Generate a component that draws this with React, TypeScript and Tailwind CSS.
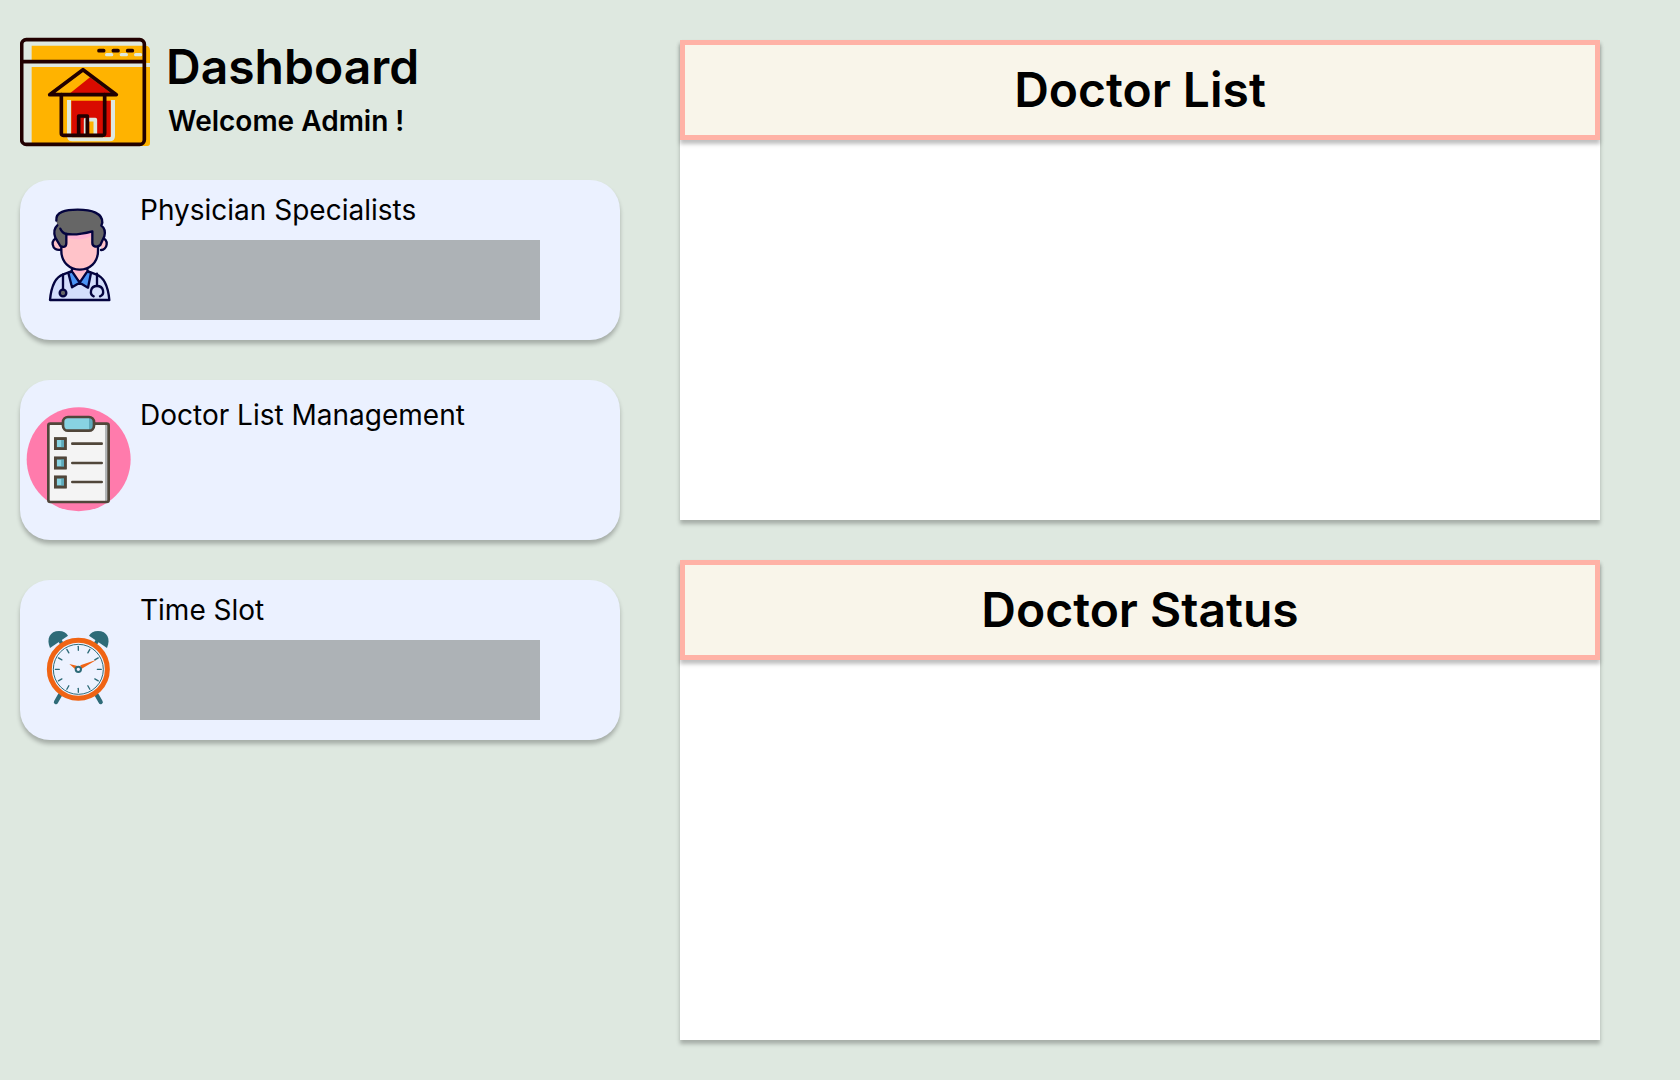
import type { ReactNode } from "react";

function HomeWindowIcon() {
  return (
    <svg viewBox="30 21 396 330" className="h-[110px] w-[132px] shrink-0" fill="none" aria-hidden="true">
      <path d="M65 47H406Q420 47 420 61V99H65zM65 111H420V340Q420 348 412 348H65z" fill="#ffb300" />
      <path d="M180 190L240 142L304 190z" fill="#d90b00" />
      <path d="M184 212H302V322H184z" fill="#d90b00" />
      <path d="M177 210V318Q177 328 187 328H299Q309 328 309 318V210" stroke="#dee8e0" strokeWidth="12" />
      <path d="M238 270H252V312H238z" fill="#ffb300" />
      <path d="M227 312V269H256V312" stroke="#dee8e0" strokeWidth="11" strokeLinejoin="round" />
      <path d="M290 74H305M334 74H349M377 74H392" stroke="#dee8e0" strokeWidth="10" strokeLinecap="round" />
      <g stroke="#210000" strokeWidth="11" strokeLinecap="round" strokeLinejoin="round">
        <rect x="35" y="29" width="368" height="314" rx="14" />
        <path d="M35 95H403" />
        <path d="M267 62H281M310 62H324M353 62H367" />
        <path d="M119 194L219 119L319 194z" />
        <path d="M154 194V310Q154 316 160 316H278Q284 316 284 310V194" />
        <path d="M206 312V258H232V312" />
      </g>
    </svg>
  );
}

function PhysicianIcon() {
  return (
    <svg viewBox="30 30 360 480" className="h-[160px] w-[120px] shrink-0" fill="none" aria-hidden="true">
      <g stroke="#04043f" strokeWidth="7" strokeLinecap="round" strokeLinejoin="round">
        <path d="M120 390Q126 324 160 313L184 304H234L258 313Q292 324 298 390z" fill="#d3defc" />
        <path d="M186 290V312L209 338L232 312V290" fill="#ffc3c9" />
        <path d="M175 309L186 352L209 338L186 304zM243 309L234 353L209 338L232 304z" fill="#4c94f5" />
        <path d="M146 206C132 203 127 214 128 223C130 236 140 242 153 239" fill="#ffc3c9" />
        <path d="M273 206C286 203 291 214 290 223C289 233 281 241 273 240" fill="#ffc3c9" />
        <path d="M154 186V242C154 278 180 299 209 299C239 299 264 278 264 242V184z" fill="#ffc3c9" />
      </g>
      <path d="M168 196Q204 199 246 184V197Q210 216 168 202z" fill="#ffb3d4" />
      <path d="M189 301Q209 306 229 301V304Q209 312 189 304z" fill="#ffb3d4" />
      <path d="M139 152C136 126 166 119 203 119C246 119 278 130 277 158L274 167C285 175 286 188 283 199L271 225C261 233 247 231 247 219V184C221 191 193 196 169 192V219C169 232 159 233 151 228L136 203C131 189 133 174 142 166z" fill="#666" />
      <g stroke="#04043f" strokeWidth="7" strokeLinecap="round" strokeLinejoin="round">
        <path d="M139 152C136 126 166 119 203 119C246 119 278 130 277 158L274 167C285 175 286 188 283 199L271 225C261 233 247 231 247 219V184C221 191 193 196 169 192V219C169 232 159 233 151 228L136 203C131 189 133 174 142 166" />
        <path d="M151 176C155 185 161 190 169 192" />
        <path d="M159 313V358M261 311V347" />
        <circle cx="159" cy="369" r="10" fill="#666" />
        <path d="M251 379C238 374 240 348 261 348C282 348 285 374 270 379" />
      </g>
    </svg>
  );
}

function ClipboardIcon() {
  return (
    <svg viewBox="30 30 360 480" className="h-[160px] w-[120px] shrink-0" fill="none" aria-hidden="true">
      <circle cx="206" cy="268" r="156" fill="#ff7bac" />
      <rect x="115" y="161" width="181" height="235" rx="5" fill="#f4f4f4" />
      <path d="M285 163H295V393H285z" fill="#b3b6b8" />
      <rect x="115" y="161" width="181" height="235" rx="6" stroke="#50463a" strokeWidth="8" />
      <rect x="159" y="141" width="93" height="41" rx="14" fill="#88d3e2" />
      <path d="M237 142Q250 142 250 154V169Q250 181 237 181z" fill="#5faabb" />
      <rect x="159" y="141" width="93" height="41" rx="15" stroke="#50463a" strokeWidth="8" />
      {[221, 279, 336].map((y) => (
        <g key={y} stroke="#50463a" strokeWidth="8">
          <rect x="136" y={y - 15} width="30" height="30" fill="#88d3e2" />
          <path d={`M158 ${y - 12}V${y + 12}`} stroke="#5faabb" strokeWidth="9" />
          <rect x="136" y={y - 15} width="30" height="30" />
          <path d={`M187 ${y}H275`} strokeLinecap="round" />
        </g>
      ))}
    </svg>
  );
}

function AlarmClockIcon() {
  const angles = [0, 30, 60, 90, 120, 150, 180, 210, 240, 270, 300, 330];
  return (
    <svg viewBox="30 30 360 480" className="h-[160px] w-[120px] shrink-0" fill="none" aria-hidden="true">
      <path d="M150 375L138 396M260 375L272 396" stroke="#2e6b78" strokeWidth="13" strokeLinecap="round" />
      <path d="M150 212L160 228M262 212L252 228" stroke="#2e6b78" strokeWidth="11" />
      <path d="M120 234C108 206 120 183 147 183C160 183 169 189 174 197z" fill="#2e6b78" />
      <path d="M291 234C303 206 291 183 264 183C251 183 242 189 237 197z" fill="#2e6b78" />
      <circle cx="205" cy="298" r="87" fill="#edf2ff" stroke="#f06414" strokeWidth="15" />
      <circle cx="205" cy="298" r="75" stroke="#2e6b78" strokeWidth="3" />
      {angles.map((a) => (
        <path key={a} d="M205 229V241" transform={`rotate(${a} 205 298)`} stroke="#2e6b78" strokeWidth="4" strokeLinecap="round" />
      ))}
      <path d="M178 282L200 287L204 298L195 297zM260 269L211 286L214 297z" fill="#f06414" />
      <circle cx="205" cy="298" r="8" fill="#edf2ff" stroke="#2e6b78" strokeWidth="6" />
    </svg>
  );
}

function MenuCard({ title, icon, filled }: { title: string; icon: ReactNode; filled: boolean }) {
  return (
    <section className="flex min-h-[160px] rounded-[30px] bg-[#ebf1ff] shadow-[0_4px_4px_rgba(0,0,0,0.25)]">
      {icon}
      <div className={filled ? "flex-1 pt-[10px] pr-5" : "flex-1 pt-[15px] pr-5"}>
        <h2 className="text-[28px] leading-10 font-normal">{title}</h2>
        {filled && <div className="mt-[10px] h-20 w-full max-w-[400px] bg-[#adb2b6]" />}
      </div>
    </section>
  );
}

function Panel({ title }: { title: string }) {
  return (
    <section className="min-h-[480px] bg-white shadow-[0_4px_4px_rgba(0,0,0,0.25)]">
      <h2 className="border-[5px] border-[#ffb2a6] bg-[#f9f5ea] text-center text-[48px] leading-[90px] font-semibold shadow-[0_4px_4px_rgba(0,0,0,0.25)]">
        {title}
      </h2>
    </section>
  );
}

export default function App() {
  return (
    <main className="grid min-h-screen grid-cols-[15fr_23fr] items-start gap-15 bg-[#dee8e0] pr-20 pl-5 font-['Inter',sans-serif] text-black">
      <div className="flex flex-col gap-10 pt-[37px]">
        <header className="-mb-[7px] flex gap-[14px]">
          <HomeWindowIcon />
          <div>
            <h1 className="text-[48px] leading-[60px] font-semibold">Dashboard</h1>
            <p className="pl-[2px] text-[28px] leading-[48px] font-semibold">Welcome Admin !</p>
          </div>
        </header>
        <MenuCard title="Physician Specialists" icon={<PhysicianIcon />} filled />
        <MenuCard title="Doctor List Management" icon={<ClipboardIcon />} filled={false} />
        <MenuCard title="Time Slot" icon={<AlarmClockIcon />} filled />
      </div>
      <div className="flex flex-col gap-10 py-10">
        <Panel title="Doctor List" />
        <Panel title="Doctor Status" />
      </div>
    </main>
  );
}
